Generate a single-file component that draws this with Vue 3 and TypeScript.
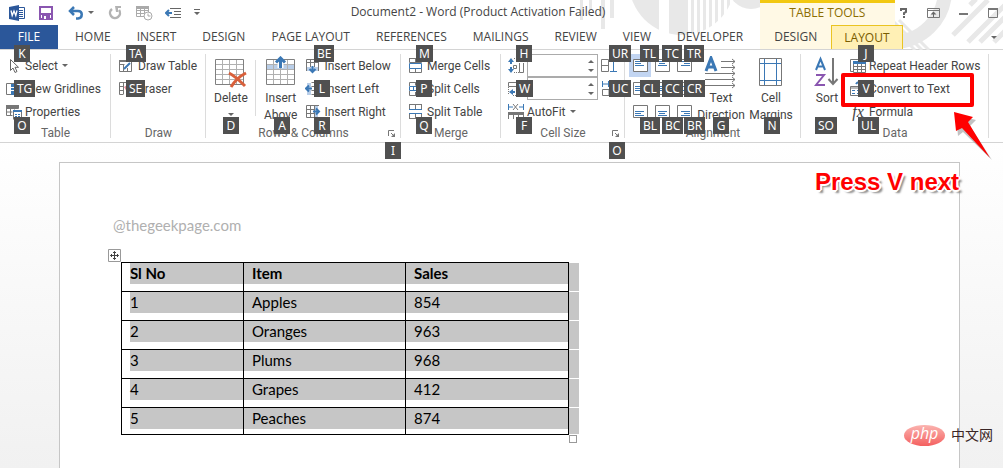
<script setup lang="ts">
import { ref } from 'vue'

interface Tip { t: string; x: number; row: number }

const tabs: string[] = ['HOME', 'INSERT', 'DESIGN', 'PAGE LAYOUT', 'REFERENCES', 'MAILINGS', 'REVIEW', 'VIEW', 'DEVELOPER']

const tips: Tip[] = [
  { t: 'K', x: 14, row: 1 }, { t: 'TG', x: 14, row: 2 }, { t: 'O', x: 14, row: 3 },
  { t: 'TA', x: 126, row: 1 }, { t: 'SE', x: 126, row: 2 },
  { t: 'D', x: 223, row: 3 }, { t: 'A', x: 274, row: 3 },
  { t: 'BE', x: 314, row: 1 }, { t: 'L', x: 314, row: 2 }, { t: 'R', x: 314, row: 3 }, { t: 'I', x: 385, row: 4 },
  { t: 'M', x: 416, row: 1 }, { t: 'P', x: 416, row: 2 }, { t: 'Q', x: 416, row: 3 },
  { t: 'H', x: 516, row: 1 }, { t: 'W', x: 516, row: 2 }, { t: 'F', x: 516, row: 3 },
  { t: 'UR', x: 609, row: 1 }, { t: 'UC', x: 609, row: 2 }, { t: 'O', x: 609, row: 4 },
  { t: 'TL', x: 640, row: 1 }, { t: 'CL', x: 640, row: 2 }, { t: 'BL', x: 640, row: 3 },
  { t: 'TC', x: 662, row: 1 }, { t: 'CC', x: 662, row: 2 }, { t: 'BC', x: 662, row: 3 },
  { t: 'TR', x: 684, row: 1 }, { t: 'CR', x: 684, row: 2 }, { t: 'BR', x: 684, row: 3 },
  { t: 'G', x: 713, row: 3 }, { t: 'N', x: 764, row: 3 }, { t: 'SO', x: 815, row: 3 },
  { t: 'J', x: 858, row: 1 }, { t: 'V', x: 858, row: 2 }, { t: 'UL', x: 858, row: 3 },
]

const G = 'fill="none" stroke="#777"'
const B = 'fill="none" stroke="#3b78b5"'
const icons: Record<string, string> = {
  select: `<path d="M4.500 1.500v11l2.500-2.500 2 4.500 2-1-2-4.200h3.500z" fill="#fff" stroke="#666"/>`,
  gridlines: `<path ${G} d="M.5 2.500h14v11H.5zM5.500 2.500v11M10.500 2.500v11"/><path d="M5 3h3v11H5z" fill="#3b78b5"/><path stroke="#fff" d="M5 6.500h3M5 9.500h3"/>`,
  properties: `<path ${G} d="M.5 1.500h12v3M.5 1.500v10h6M.5 4.500h12M.5 8h6M4.500 1.500v10M8.500 1.500v4"/><path fill="#777" d="M0 1h13v3H0z"/><rect x="7.500" y="6.500" width="8" height="8.500" fill="#fff" stroke="#777"/><path d="M7 6h9v2H7z" fill="#3b78b5"/><path d="M9 10h2v1H9zM12 10h2v1h-2zM9 12h2v1H9zM12 12h2v1h-2z" fill="#3b78b5"/>`,
  draw: `<path ${G} d="M.5 2.500h12v11H.5zM.5 6.500h5M4.500 6v8M8.500 10v4"/><path fill="#777" d="M0 2h13v2H0z"/><path stroke="#3b78b5" stroke-width="2" d="M5 11l6-6"/>`,
  eraser: `<path ${G} d="M4 13.500H.5v-12h11v12H8M.5 5.500h4M.5 9.500h4M4.500 1.500v12"/><path d="M5 6l5-3 3 5-5 3z" fill="#e98a96"/>`,
  below: `<path ${G} d="M1.500 1.500h12v8h-12zM1.500 4.500h12M5.500 1.500v8M9.500 1.500v8"/><path fill="#b9cee8" d="M2 9h12v4H2z"/><path fill="#777" d="M1 9h1v4H1zM13 9h1v4h-1z"/><path ${B} stroke-width="2" d="M7.500 8v6M4.500 11l3 3 3-3"/>`,
  left: `<path ${G} d="M6.500 1.500h7v12h-7M6.500 5.500h7M6.500 9.500h7M10.500 1.500v12"/><path fill="#b9cee8" d="M2 2h4v12H2z"/><path ${B} stroke-width="2" d="M7 7.500H1M4 4.500l-3 3 3 3"/>`,
  right: `<path ${G} d="M1.500 1.500h8v12h-8zM1.500 5.500h8M1.500 9.500h8M5.500 1.500v12"/><path fill="#b9cee8" d="M10 2h3v12h-3z"/><path stroke="#777" d="M9 1.500h5M9 13.500h5"/><path ${B} stroke-width="2" d="M8 7.500h6M11 4.500l3 3-3 3"/>`,
  merge: `<path ${G} d="M1.500 1v3.500h12V1M7.500 1v3.500M1.500 14.500v-4h12v4zM7.500 10.500v4M1 .5h13"/><path ${B} d="M1.500 5.500h12v5h-12z"/>`,
  split: `<path ${G} d="M1.500 1.500h12v3.500M1.500 1.500V5M7.500 1.500v3M1.500 10v4.500h12V10M7.500 11v3.500"/><path ${B} d="M1.500 5.500h12v4h-12zM5.500 5.500v4M9.500 5.500v4"/>`,
  splitTable: `<path ${G} d="M1.500 0v5.500M13.500 0v5.500M7.500 0v5M1.500 9.500v5.500M7.500 10v5M13.500 9.500v5.500M1 .5h13M1 14.500h13"/><path ${B} d="M1 5.500h13M1 9.500h13"/>`,
  height: `<path ${G} stroke-dasharray="1 1" d="M6 .5h10M6 14.500h6"/><path ${G} d="M11.500 5v9.500h4V5M5.500 7.500h3v3h-3z"/><path fill="#3b78b5" d="M3 0l3 4H4v2H2V4H0zM3 15l-3-4h2V9h2v2h2z"/>`,
  width: `<path ${G} stroke-dasharray="1 1" d="M.5 6v8M5 14.500h4"/><path ${G} d="M.5 1.500h14v4H.5z"/><path fill="#3b78b5" d="M1 11l4-3v2h2v2H5v2z"/>`,
  autofit: `<path ${B} d="M.5 0v6M15.500 0v6M1 3h4M15 3h-4"/><path ${G} d="M5 0l5 6M10 0L5 6"/><path fill="#777" d="M0 8h16v3H0z"/><path stroke="#777" d="M.5 11v4M5.500 11v4M10.500 11v4M15.500 11v4"/>`,
  distRows: `<path ${G} d="M.5 1.500h7v12h-7zM.5 7.500h7"/><path ${B} d="M9 3.500h7M9 13.500h7M12.500 4v9"/>`,
  distCols: `<path ${B} d="M1.500 0v6M7.500 0v6M14.500 0v6M1 3h14"/><path ${G} d="M1.500 8.500h13v6h-13zM8 8.500v6"/>`,
  repeat: `<path ${G} d="M3.500 13.500h-3V1.500h9"/><path ${G} d="M3.500 3.500h12v11h-12zM7.500 5v9M11.500 5v9M3.500 8.500h12M3.500 11.500h12"/><path fill="#3b78b5" d="M3 3h13v3H3z"/>`,
  convert: `<path ${G} d="M.5 5.500h12v9H.5zM.5 7h12"/><path fill="#3b78b5" d="M2 9h3v1H2zM7 9h3v1H7zM2 12h3v1H2zM7 12h3v1H7z"/><path ${B} stroke-width="2" d="M6 3c2-3 6-2 7 2"/>`,
}

const selectRows = [
  { icon: 'select', label: 'Select', arrow: true },
  { icon: 'gridlines', label: 'View Gridlines', arrow: false },
  { icon: 'properties', label: 'Properties', arrow: false },
]
const drawRows = [{ icon: 'draw', label: 'Draw Table' }, { icon: 'eraser', label: 'Eraser' }]
const insertRows = [{ icon: 'below', label: 'Insert Below' }, { icon: 'left', label: 'Insert Left' }, { icon: 'right', label: 'Insert Right' }]
const mergeRows = [{ icon: 'merge', label: 'Merge Cells' }, { icon: 'split', label: 'Split Cells' }, { icon: 'splitTable', label: 'Split Table' }]

const linesY = [[2, 4, 6], [4, 6, 8], [6, 8, 10]]
function alignPath(i: number): string {
  const ys = linesY[Math.floor(i / 3)]
  const c = i % 3
  const widths = [9, 6, 9]
  return ys.map((y, k) => {
    const w = widths[k]
    const x = c === 0 ? 2 : c === 1 ? 2 + Math.floor((11 - w) / 2) : 13 - w
    return `M${x} ${y + 0.5}h${w}`
  }).join('')
}
const alignNames = ['Top Left', 'Top Center', 'Top Right', 'Center Left', 'Center', 'Center Right', 'Bottom Left', 'Bottom Center', 'Bottom Right']

const rows = [
  ['1', 'Apples', '854'], ['2', 'Oranges', '963'], ['3', 'Plums', '968'], ['4', 'Grapes', '412'], ['5', 'Peaches', '874'],
]
const cellHeight = ref('')
const cellWidth = ref('')
</script>

<template>
  <div class="app">
    <header class="top">
      <svg class="art" width="460" height="50" viewBox="543 0 460 50" aria-hidden="true">
        <defs><clipPath id="disc"><circle cx="682" cy="-18" r="53" /></clipPath></defs>
        <g fill="#e8e8e8">
          <path d="M580 0h3v20h-3zM589 0h3v10h-3zM601 0h4v29h-4zM610 0h4v18h-4z" />
          <g clip-path="url(#disc)">
            <path d="M629 0h30v40h-30zM669 0h19v40h-19zM691 0h3v40h-3zM697 0h3v40h-3zM703 0h3v40h-3zM709 0h3v40h-3zM715 0h3v40h-3zM721 0h3v40h-3zM727 0h3v40h-3z" />
          </g>
          <circle cx="751" cy="-14" r="23" />
        </g>
        <g fill="none" stroke="#e8e8e8">
          <circle cx="893" cy="-10" r="52" stroke-width="14" />
          <path stroke-width="3" d="M885 20l30 30M892 20l30 30M899 20l30 30" />
          <path stroke-width="5" d="M968 42l42-42M953 35l35-35M980 42l30-30M970 5l6-6M994 42l12-12" />
        </g>
      </svg>

      <div class="titlebar">
        <div class="qat">
          <button class="q word" aria-label="Word">
            <svg width="16" height="16" viewBox="0 0 16 16"><path fill="#fff" stroke="#2b579a" d="M8 2.500h7.500v11H8z" /><path stroke="#2b579a" d="M10 5.500h4M10 7.500h4M10 9.500h4M10 11.500h4" /><path fill="#2b579a" d="M0 2l10-2v16L0 14z" /><path fill="none" stroke="#fff" stroke-width="1.300" d="M2 5.500l1.200 5L5 6l1.800 4.500L8 5.500" /></svg>
          </button>
          <button class="q save" aria-label="Save">
            <svg width="14" height="14" viewBox="0 0 14 14"><path fill="#fff" stroke="#8a56b0" stroke-width="2" d="M1 1h12v12H1z" /><path fill="#8a56b0" d="M1 7h12v2H1zM3 9h8v5H3z" /><path fill="#fff" d="M5 10h2v3H5z" /></svg>
          </button>
          <button class="q undo" aria-label="Undo">
            <svg width="16" height="14" viewBox="0 0 16 14"><path fill="none" stroke="#3b78b5" stroke-width="2.500" d="M6 1L2 5l4 4M2 5h8c5 0 5 7 0 7.500H8" /></svg>
          </button>
          <span class="caret"></span>
          <button class="q redo" aria-label="Repeat">
            <svg width="14" height="14" viewBox="0 0 14 14"><path fill="none" stroke="#b3b3b3" stroke-width="2.500" d="M4 3a5 5 0 1 0 7 1" /><path fill="#b3b3b3" d="M7 0h6v2h-3v4H8z" /></svg>
          </button>
          <button class="q tclock" aria-label="Insert table">
            <svg width="17" height="16" viewBox="0 0 17 16"><path fill="none" stroke="#aaa" d="M.5 1.500h12v10H.5zM.5 5.500h12M.5 8.500h12M4.500 3v9M8.500 3v9" /><path fill="#aaa" d="M0 1h13v3H0z" /><circle cx="12" cy="11" r="4" fill="#fff" stroke="#aaa" /><path stroke="#aaa" fill="none" d="M12 8.500V11h2.500" /></svg>
          </button>
          <button class="q indent" aria-label="Decrease indent">
            <svg width="16" height="12" viewBox="0 0 16 12"><path stroke="#666" d="M5 1.500h11M9 4.500h7M9 7.500h7M5 10.500h11" /><path fill="none" stroke="#3b78b5" stroke-width="2" d="M7 6H1M4 3L1 6l3 3" /></svg>
          </button>
          <button class="q more" aria-label="Customize">
            <svg width="6" height="7" viewBox="0 0 6 7"><path fill="#666" d="M0 0h6v1H0zM0 3h6L3 6z" /></svg>
          </button>
        </div>
        <h1 class="title">Document2 - Word (Product Activation Failed)</h1>
        <div class="window">
          <button aria-label="Help"><svg width="8" height="10" viewBox="0 0 8 10"><path fill="none" stroke="#666" stroke-width="2" d="M1 3V1h5v3L4 5v2M4 8v2" /></svg></button>
          <button aria-label="Ribbon options"><svg width="13" height="10" viewBox="0 0 13 10"><path fill="none" stroke="#777" d="M.5.500h12v9H.5zM.5 2.500h12" /><path fill="#666" d="M3.500 6.500l3-3 3 3zM6 5h1v4H6z" /></svg></button>
          <button aria-label="Minimize"><svg width="10" height="10" viewBox="0 0 10 10"><path fill="#777" d="M0 5h9v2H0z" /></svg></button>
          <button aria-label="Maximize"><svg width="10" height="10" viewBox="0 0 10 10"><path fill="none" stroke="#777" d="M.5.500h9v9h-9z" /><path fill="#777" d="M0 0h10v2H0z" /></svg></button>
        </div>
      </div>

      <nav class="tabs">
        <button class="file">FILE</button>
        <button v-for="t in tabs" :key="t" class="tab">{{ t }}</button>
        <div class="context">
          <span class="contexttitle">TABLE TOOLS</span>
          <button class="tab">DESIGN</button>
          <button class="tab active">LAYOUT</button>
        </div>
        <span class="caret end"></span>
      </nav>
    </header>

    <section class="ribbon">
      <div class="group g-table">
        <div class="body">
          <div class="col">
            <button v-for="r in selectRows" :key="r.label" class="row"><svg width="16" height="16" v-html="icons[r.icon]"></svg>{{ r.label }}<i v-if="r.arrow" class="caret"></i></button>
          </div>
        </div>
        <h2>Table</h2>
      </div>

      <div class="group g-draw">
        <div class="body">
          <div class="col">
            <button v-for="r in drawRows" :key="r.label" class="row"><svg width="16" height="16" v-html="icons[r.icon]"></svg>{{ r.label }}</button>
          </div>
        </div>
        <h2>Draw</h2>
      </div>

      <div class="group g-rows">
        <div class="body">
          <button class="big delete">
            <svg width="32" height="34" viewBox="0 0 32 34"><path fill="#fff" stroke="#808080" d="M.5 3.500h28v25H.5z" /><path stroke="#b0b0b0" d="M1 8.500h27M1 13.500h27M1 18.500h27M1 23.500h27M7.500 4v24M14.500 4v24M21.500 4v24" /><path fill="none" stroke="#d9603b" stroke-width="3" d="M14 17c6 3 11 8 16 13M31 17c-6 3-12 9-15 14" /></svg>
            <span>Delete</span><i class="caret"></i>
          </button>
          <span class="vline"></span>
          <button class="big">
            <svg width="30" height="34" viewBox="0 0 30 34"><path fill="#fff" stroke="#808080" d="M.5 3.500h28v25H.5z" /><path fill="#b9cee8" d="M1 8h27v5H1z" /><path stroke="#b0b0b0" d="M1 8.500h27M1 13.500h27M1 18.500h27M1 23.500h27M7.500 4v24M14.500 4v24M21.500 4v24" /><path fill="none" stroke="#fff" stroke-width="6" d="M14.500 12V3" /><path fill="none" stroke="#3b78b5" stroke-width="3" d="M14.500 12V2M10 6.500L14.500 2 19 6.500" /></svg>
            <span>Insert<br>Above</span>
          </button>
          <div class="col">
            <button v-for="r in insertRows" :key="r.label" class="row"><svg width="16" height="16" v-html="icons[r.icon]"></svg>{{ r.label }}</button>
          </div>
        </div>
        <h2>Rows &amp; Columns</h2>
        <button class="launch" aria-label="Table properties"><svg width="8" height="8" viewBox="0 0 8 8"><path fill="none" stroke="#777" d="M.5 6V.500H6M3 3l3 3" /><path fill="#777" d="M7 3v4H3z" /></svg></button>
      </div>

      <div class="group g-merge">
        <div class="body">
          <div class="col">
            <button v-for="r in mergeRows" :key="r.label" class="row"><svg width="16" height="16" v-html="icons[r.icon]"></svg>{{ r.label }}</button>
          </div>
        </div>
        <h2>Merge</h2>
      </div>

      <div class="group g-size">
        <div class="body">
          <div class="col">
            <label class="row"><svg width="16" height="16" v-html="icons.height"></svg><span class="spin"><input v-model="cellHeight" aria-label="Cell height"><span class="arrows"><i></i><i></i></span></span></label>
            <label class="row"><svg width="16" height="16" v-html="icons.width"></svg><span class="spin"><input v-model="cellWidth" aria-label="Cell width"><span class="arrows"><i></i><i></i></span></span></label>
            <button class="row"><svg width="16" height="16" v-html="icons.autofit"></svg>AutoFit<i class="caret"></i></button>
          </div>
          <div class="col dist">
            <button class="row" aria-label="Distribute rows"><svg width="16" height="16" v-html="icons.distRows"></svg></button>
            <button class="row" aria-label="Distribute columns"><svg width="16" height="16" v-html="icons.distCols"></svg></button>
          </div>
        </div>
        <h2>Cell Size</h2>
        <button class="launch" aria-label="Cell size options"><svg width="8" height="8" viewBox="0 0 8 8"><path fill="none" stroke="#777" d="M.5 6V.500H6M3 3l3 3" /><path fill="#777" d="M7 3v4H3z" /></svg></button>
      </div>

      <div class="group g-align">
        <div class="body">
          <div class="grid9">
            <button v-for="(n, i) in alignNames" :key="n" :class="{ on: i === 0 }" :aria-label="n">
              <svg width="15" height="13" viewBox="0 0 15 13"><path fill="#fff" stroke="#777" d="M.5.500h14v12H.5z" /><path :d="alignPath(i)" stroke="#3b78b5" /></svg>
            </button>
          </div>
          <button class="big direction">
            <svg width="34" height="34" viewBox="0 0 34 34"><path fill="none" stroke="#3b78b5" stroke-width="3" d="M2 15L7 2l5 13M4 11h7" /><path fill="none" stroke="#777" d="M17 5.500h14M17 11.500h14M1 17.500h30M1 23.500h30M1 29.500h30M28 3l3 2.500L28 8M28 9l3 2.500-3 2.500M28 15l3 2.500-3 2.500M28 21l3 2.500-3 2.500M28 27l3 2.500-3 2.500" /></svg>
            <span>Text<br>Direction</span>
          </button>
          <button class="big margins">
            <svg width="24" height="34" viewBox="0 0 24 34"><path fill="#fff" stroke="#777" d="M.5 2.500h22v27H.5z" /><path stroke="#3b78b5" d="M5.500 3v26M17.500 3v26M1 7.500h21M1 24.500h21" /></svg>
            <span>Cell<br>Margins</span>
          </button>
        </div>
        <h2>Alignment</h2>
      </div>

      <div class="group g-data">
        <div class="body">
          <button class="big sort">
            <svg width="26" height="34" viewBox="0 0 26 34"><path fill="none" stroke="#3b78b5" stroke-width="2" d="M2 14L6.500 3 11 14M3 10.500h7" /><path fill="none" stroke="#8a56b0" stroke-width="2" d="M2 19h8L2 29h9" /><path fill="none" stroke="#777" stroke-width="2" d="M19 2v26M14.500 23l4.500 5 4.500-5" /></svg>
            <span>Sort</span>
          </button>
          <div class="col">
            <button class="row"><svg width="16" height="16" v-html="icons.repeat"></svg>Repeat Header Rows</button>
            <button class="row"><svg width="16" height="16" v-html="icons.convert"></svg>Convert to Text</button>
            <button class="row"><span class="fx">fx</span>Formula</button>
          </div>
        </div>
        <h2>Data</h2>
      </div>

      <kbd v-for="(k, i) in tips" :key="i" class="tip" :class="'r' + k.row" :style="{ left: k.x + 'px' }">{{ k.t }}</kbd>

      <div class="callout"></div>
      <svg class="arrow" width="50" height="56" viewBox="0 0 50 56" aria-hidden="true">
        <path fill="#999" opacity=".6" d="M6 7l20 5-6 6 22 34-29-28-5 4z" />
        <path fill="#f00" d="M4 4l19 5-5 5 22 36-28-30-6 3z" />
      </svg>
      <p class="press">Press V next</p>
    </section>

    <main class="canvas">
      <article class="page">
        <p class="mark">@thegeekpage.com</p>
        <div class="tablewrap">
          <button class="move" aria-label="Move table"><svg width="13" height="13" viewBox="0 0 13 13"><path fill="#fff" stroke="#999" d="M.5.500h12v12H.5z" /><path fill="none" stroke="#444" d="M6.500 2.500v8M2.500 6.500h8M5 4l1.500-1.500L8 4M5 9l1.500 1.500L8 9M4 5L2.500 6.500 4 8M9 5l1.500 1.500L9 8" /></svg></button>
          <table>
            <thead>
              <tr><th class="c1"><div>Sl No</div></th><th class="c2"><div>Item</div></th><th class="c3"><div>Sales</div></th></tr>
            </thead>
            <tbody>
              <tr v-for="r in rows" :key="r[0]"><td v-for="(c, i) in r" :key="i"><div>{{ c }}</div></td></tr>
            </tbody>
          </table>
          <span class="handle"></span>
        </div>
      </article>
      <div class="brand"><span class="php">php</span><span>中文网</span></div>
    </main>
  </div>
</template>

<style>
html, body, #app { height: 100%; }
body { margin: 0; overflow: hidden; }
</style>

<style scoped>
.app { min-height: 100%; display: flex; flex-direction: column; background: #fff; color: #444; font: 12px/16px "Open Sans", "Noto Sans", sans-serif; overflow: hidden; }
button { border: 0; background: none; padding: 0; margin: 0; font: inherit; color: inherit; white-space: nowrap; }
svg { display: block; flex: none; }
h1, h2, p { margin: 0; font-weight: 400; }
.caret { flex: none; width: 0; height: 0; border: 3px solid transparent; border-top-color: #666; border-bottom: 0; }

.top { position: relative; border-bottom: 1px solid #d4d4d4; }
.art { position: absolute; right: 0; top: 0; }
.titlebar { position: relative; height: 25px; display: flex; align-items: center; }
.qat { display: flex; align-items: center; padding-left: 9px; width: 200px; height: 22px; }
.save { margin-left: 14px; }
.undo { margin-left: 15px; }
.qat .caret { margin-left: 4px; }
.redo { margin-left: 14px; }
.tclock { margin-left: 14px; }
.indent { margin-left: 12px; }
.more { margin-left: 13px; }
.title { flex: 1; text-align: center; font-size: 12px; line-height: 24px; height: 25px; padding-right: 153px; white-space: nowrap; }
.window { display: flex; align-items: center; gap: 19px; padding-right: 5px; height: 22px; }
.tabs { position: relative; height: 24px; display: flex; align-items: stretch; }
.file { width: 58px; background: #2b579a; color: #fff; }
.file + .tab { margin-left: 4px; }
.tab { padding: 0 13px; }
.context { position: relative; display: flex; margin-left: 4px; background: #fff9e5; }
.context .tab { padding: 0 14px; }
.contexttitle { position: absolute; left: 0; right: 8px; bottom: 24px; height: 22px; line-height: 20px; border-top: 3px solid #f2c811; background: #fff9e5; text-align: center; color: #8c6d00; }
.context .active { padding: 0 12px; border: 1px solid #eac421; border-bottom: 0; background: #fff0b5; color: #7a5c00; }
.end { align-self: center; margin: 0 6px 0 auto; }

.ribbon { position: relative; z-index: 1; display: flex; background: #fff; border-bottom: 1px solid #d4d4d4; height: 92px; font-family: Roboto, "Noto Sans", sans-serif; }
.group { position: relative; box-sizing: border-box; flex: none; padding-top: 4px; }
.group::after { content: ""; position: absolute; right: 0; top: 4px; bottom: 4px; width: 1px; background: #dcdcdc; }
.g-table { width: 111px; }
.g-draw { width: 95px; }
.g-rows { width: 195px; }
.g-merge { width: 100px; }
.g-size { width: 124px; }
.g-align { width: 176px; }
.g-data { width: 188px; }
.body { display: flex; height: 69px; padding-left: 6px; }
.col { display: flex; flex-direction: column; }
.row { height: 23px; display: flex; align-items: center; gap: 3px; }
.row .caret { margin-left: 1px; }
h2 { font-size: 12px; line-height: 20px; text-align: center; color: #666; }
.g-draw .body { padding-left: 8px; }
.g-merge .body, .g-size .body { padding-left: 7px; }
.big { display: flex; flex-direction: column; align-items: center; padding-top: 2px; line-height: 17px; height: 71px; }
.big .caret { margin-top: 6px; }
.g-rows .body { padding-left: 8px; }
.delete { width: 34px; }
.vline { width: 1px; height: 56px; margin: 6px 8px 0 7px; background: #dcdcdc; }
.g-rows .col { margin-left: 8px; }
.launch { position: absolute; right: 5px; bottom: 4px; }
.spin { display: flex; width: 71px; height: 23px; box-sizing: border-box; border: 1px solid #ababab; background: #fff; }
.spin input { width: 54px; border: 0; padding: 0 3px; background: none; font: inherit; outline: 0; }
.arrows { display: flex; flex-direction: column; justify-content: center; gap: 6px; }
.arrows i { border: 3px solid transparent; border-top: 0; border-bottom-color: #666; }
.arrows i + i { border-top: 3px solid #666; border-bottom: 0; }
.dist { margin-left: 3px; }
.grid9 { display: grid; grid-template-columns: repeat(3, 22px); grid-template-rows: repeat(3, 23px); }
.grid9 button { display: grid; place-items: center; }
.grid9 .on { background: #c2d5f2; }
.g-align .body { padding-left: 4px; }
.direction { width: 52px; }
.margins { width: 48px; }
.g-data .body { padding-left: 10px; }
.sort { width: 32px; margin-right: 7px; }
.fx { width: 16px; font: italic 16px/16px "Liberation Serif", serif; }

.tip { position: absolute; z-index: 2; height: 17px; min-width: 16px; box-sizing: border-box; padding: 0 3px; background: #505050; color: #fff; font: 12px/17px "Noto Sans", sans-serif; text-align: center; }
.r1 { top: -5px; }
.r2 { top: 30px; }
.r3 { top: 67px; }
.r4 { top: 92px; }
.callout { position: absolute; z-index: 3; left: 841px; top: 23px; width: 125px; height: 26px; border: 4px solid #f00; border-radius: 2px; }
.arrow { position: absolute; z-index: 3; left: 950px; top: 58px; }
.press { position: absolute; z-index: 3; left: 815px; top: 118px; font: bold 24px/28px "Liberation Sans", Arial, sans-serif; color: #f00; white-space: nowrap;
  text-shadow: 2px 0 #fff, -2px 0 #fff, 0 2px #fff, 0 -2px #fff, 1px 1px #fff, -1px 1px #fff, 1px -1px #fff, -1px -1px #fff, 3px 3px 2px #888; }

.canvas { position: relative; flex: 1; display: flex; padding: 19px 43px 0 59px; background: linear-gradient(#fff, #f1f1f1); }
.page { flex: 1; background: #fff; border: 1px solid #c6c6c6; border-bottom: 0; padding: 51px 0 0 53px; font: 15px/20px Lato, sans-serif; color: #000; }
.mark { color: #b0b0b0; line-height: 22px; }
.tablewrap { position: relative; width: 448px; margin: 26px 0 0 8px; }
.move { position: absolute; left: -13px; top: -13px; }
table { border-collapse: collapse; table-layout: fixed; width: 448px; }
th, td { position: relative; height: 28px; padding: 0; border: 1px solid #000; vertical-align: top; text-align: left; }
tr:last-child td { height: 26px; }
thead tr th { height: 28px; }
.c1 { width: 121px; }
.c2 { width: 161px; }
th div, td div { height: 21px; line-height: 20px; padding-left: 8px; background: #c6c6c6; }
th:first-child div, td:first-child div { margin-left: 8px; padding-left: 0; }
th:last-child::after, td:last-child::after { content: ""; position: absolute; left: 100%; top: 0; width: 10px; height: 100%; margin-left: 1px; background: #c6c6c6; }
.handle { position: absolute; right: -8px; bottom: -8px; width: 6px; height: 6px; border: 1px solid #999; background: #fff; }
.brand { position: absolute; right: 10px; bottom: 22px; display: flex; align-items: flex-start; gap: 6px; font: 14px/18px "Noto Sans CJK SC", sans-serif; color: #3a2626; }
.php { width: 41px; height: 21px; border-radius: 50%; background: linear-gradient(#fbb4b0, #f46060); color: #fff; font: italic 16px/17px "Open Sans", sans-serif; text-align: center; }
</style>
